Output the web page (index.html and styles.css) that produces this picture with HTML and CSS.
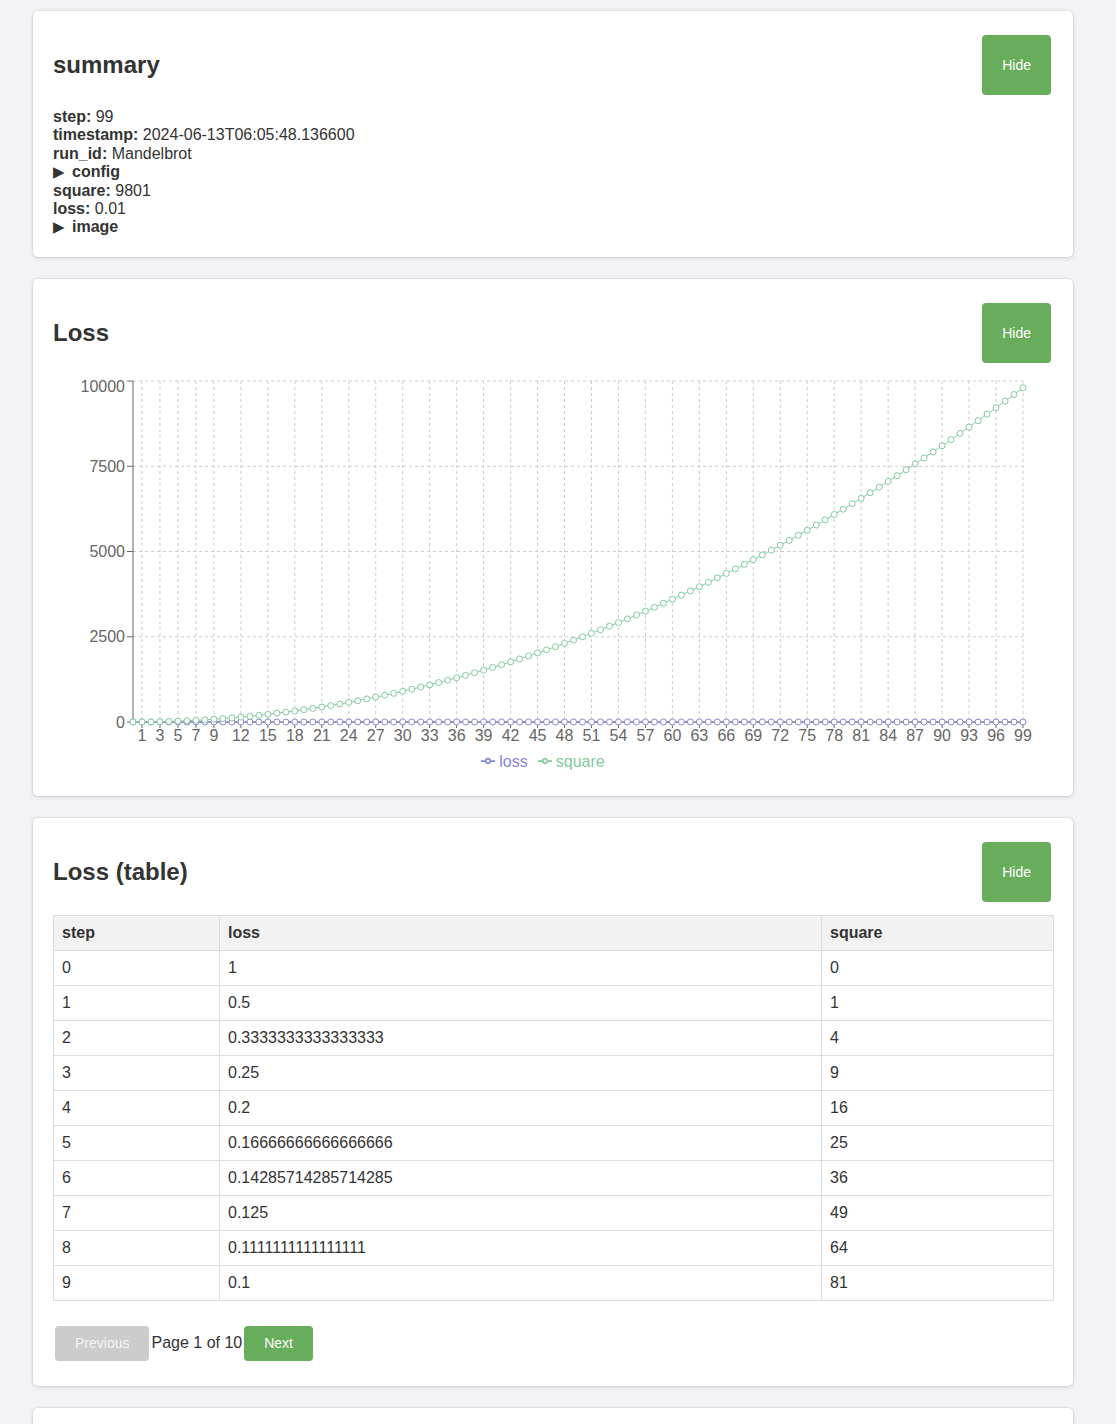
FILE: index.html
```html
<!DOCTYPE html>
<html lang="en">
<head>
<meta charset="utf-8">
<title>Run summary</title>
<link rel="stylesheet" href="styles.css">
</head>
<body>
<main class="page">
  <section class="card">
    <div class="card-header">
      <h2 class="card-title">summary</h2>
      <button class="btn btn-green btn-tall">Hide</button>
    </div>
    <div class="summary-list">
      <div><b>step:</b> 99</div>
      <div><b>timestamp:</b> 2024-06-13T06:05:48.136600</div>
      <div><b>run_id:</b> Mandelbrot</div>
      <details><summary>config</summary></details>
      <div><b>square:</b> 9801</div>
      <div><b>loss:</b> 0.01</div>
      <details><summary>image</summary></details>
    </div>
  </section>

  <section class="card">
    <div class="card-header">
      <h2 class="card-title">Loss</h2>
      <button class="btn btn-green btn-tall">Hide</button>
    </div>
    <div class="chart">
      <svg id="chart" class="chart-svg" width="1000" height="376" viewBox="0 0 1000 376"></svg>
      <div class="legend">
        <span class="legend-item legend-loss"><svg width="14" height="14" viewBox="0 0 32 32"><path d="M0,16h10.67A5.33,5.33 0 1,1 21.33,16H32M21.33,16A5.33,5.33 0 1,1 10.67,16" fill="none" stroke="#8884d8" stroke-width="4"/></svg><span>loss</span></span><span class="legend-item legend-square"><svg width="14" height="14" viewBox="0 0 32 32"><path d="M0,16h10.67A5.33,5.33 0 1,1 21.33,16H32M21.33,16A5.33,5.33 0 1,1 10.67,16" fill="none" stroke="#82ca9d" stroke-width="4"/></svg><span>square</span></span>
      </div>
    </div>
  </section>

  <section class="card">
    <div class="card-header">
      <h2 class="card-title">Loss (table)</h2>
      <button class="btn btn-green btn-tall">Hide</button>
    </div>
    <table class="data-table">
      <colgroup><col class="col-step"><col class="col-loss"><col class="col-square"></colgroup>
      <thead><tr><th>step</th><th>loss</th><th>square</th></tr></thead>
      <tbody>
        <tr><td>0</td><td>1</td><td>0</td></tr>
        <tr><td>1</td><td>0.5</td><td>1</td></tr>
        <tr><td>2</td><td>0.3333333333333333</td><td>4</td></tr>
        <tr><td>3</td><td>0.25</td><td>9</td></tr>
        <tr><td>4</td><td>0.2</td><td>16</td></tr>
        <tr><td>5</td><td>0.16666666666666666</td><td>25</td></tr>
        <tr><td>6</td><td>0.14285714285714285</td><td>36</td></tr>
        <tr><td>7</td><td>0.125</td><td>49</td></tr>
        <tr><td>8</td><td>0.1111111111111111</td><td>64</td></tr>
        <tr><td>9</td><td>0.1</td><td>81</td></tr>
      </tbody>
    </table>
    <div class="pagination">
      <button class="btn btn-gray btn-small" disabled>Previous</button>
      <span class="page-info">Page 1 of 10</span>
      <button class="btn btn-green btn-small">Next</button>
    </div>
  </section>

  <section class="card">
    <div class="card-header">
      <h2 class="card-title">Image</h2>
      <button class="btn btn-green btn-tall">Hide</button>
    </div>
  </section>
</main>
<script src="script.js"></script>
</body>
</html>
```

FILE: styles.css
```css
* { box-sizing: border-box; }
html, body { margin: 0; padding: 0; }
body {
  background: #f2f2f7;
  font-family: "Liberation Sans", Arial, sans-serif;
  color: #333;
  font-size: 16px;
}
.page {
  padding: 11px 0 40px 33px;
  display: flex;
  flex-direction: column;
  gap: 22px;
}
.card {
  width: 1040px;
  background: #fff;
  border-radius: 5px;
  box-shadow: 0 0 0 1px rgba(0,0,0,0.04), 0 1px 4px rgba(0,0,0,0.14);
  padding: 20px;
}
.card-header {
  height: 68px;
  display: flex;
  align-items: center;
  justify-content: space-between;
  margin-bottom: 9px;
}
.card-title {
  margin: 0;
  font-size: 24px;
  font-weight: bold;
  color: #333;
}
.btn {
  font-family: "Liberation Sans", Arial, sans-serif;
  font-size: 14px;
  color: #fff;
  border: none;
  border-radius: 4px;
  padding: 0 20px;
  cursor: pointer;
}
.btn-green { background: #67ad5b; }
.btn-gray { background: #cccccc; color: #f4f4f4; cursor: default; }
.btn-tall { height: 60px; margin-right: 2px; }
.btn-small { height: 35px; margin: 5px 2px; }

.summary-list { line-height: 18.4px; color: #333; }
.summary-list summary {
  font-weight: bold;
  cursor: pointer;
  list-style: none;
  display: block;
}
.summary-list summary::-webkit-details-marker { display: none; }
.summary-list summary::before {
  content: "\25B6";
  font-family: "DejaVu Sans", sans-serif;
  font-size: 15px;
  font-weight: normal;
  display: inline-block;
  width: 19px;
}

.chart { width: 1000px; height: 400px; }
.chart-svg { display: block; font-family: "Liberation Sans", Arial, sans-serif; }
.legend {
  margin-left: 20px;
  width: 950px;
  height: 19px;
  text-align: center;
  font-size: 16px;
  line-height: 19px;
}
.legend-item {
  display: inline-block;
  margin-right: 10px;
}
.legend-item svg { vertical-align: -1px; margin-right: 4px; }
.legend-loss { color: #8884d8; }
.legend-square { color: #82ca9d; }

.data-table {
  width: 1000px;
  border-collapse: collapse;
  table-layout: fixed;
  color: #333;
}
.col-step { width: 166px; }
.col-loss { width: 602px; }
.col-square { width: 232px; }
.data-table th, .data-table td {
  border: 1px solid #ddd;
  padding: 8px;
  line-height: 18px;
  text-align: left;
  font-size: 16px;
}
.data-table th { background: #f2f2f2; font-weight: bold; }

.pagination {
  margin-top: 20px;
  display: flex;
  align-items: center;
}
.page-info { color: #333; font-size: 16px; }
```

FILE: script.js
```js
(function () {
  var NS = "http://www.w3.org/2000/svg";
  var svg = document.getElementById("chart");
  var L = 80, R = 970, T = 5, B = 346;
  function xs(i) { return L + i * (R - L) / 99; }
  function ys(v) { return B - v / 10000 * (B - T); }
  function el(tag, attrs, text) {
    var e = document.createElementNS(NS, tag);
    for (var k in attrs) e.setAttribute(k, attrs[k]);
    if (text !== undefined) e.textContent = text;
    svg.appendChild(e);
    return e;
  }
  var xt = [1, 3, 5, 7, 9];
  for (var t = 12; t <= 99; t += 3) xt.push(t);
  var yt = [0, 2500, 5000, 7500, 10000];
  yt.forEach(function (v) {
    el("line", { x1: L, x2: R, y1: ys(v), y2: ys(v), stroke: "#ccc", "stroke-dasharray": "3 3" });
  });
  xt.forEach(function (i) {
    el("line", { x1: xs(i), x2: xs(i), y1: T, y2: B, stroke: "#ccc", "stroke-dasharray": "3 3" });
  });
  el("line", { x1: L, x2: R, y1: B, y2: B, stroke: "#666" });
  el("line", { x1: L, x2: L, y1: T, y2: B, stroke: "#666" });
  yt.forEach(function (v) {
    var ly = v === 10000 ? ys(v) + 5 : ys(v);
    el("line", { x1: L - 6, x2: L, y1: ys(v), y2: ys(v), stroke: "#666" });
    el("text", { x: L - 8, y: ly, dy: "0.355em", "text-anchor": "end", fill: "#666", "font-size": "16" }, String(v));
  });
  xt.forEach(function (i) {
    el("line", { x1: xs(i), x2: xs(i), y1: B, y2: B + 6, stroke: "#666" });
    el("text", { x: xs(i), y: B + 8, dy: "0.71em", "text-anchor": "middle", fill: "#666", "font-size": "16" }, String(i));
  });
  function series(fn, color) {
    var pts = [];
    for (var i = 0; i < 100; i++) pts.push(xs(i).toFixed(2) + "," + ys(fn(i)).toFixed(2));
    el("polyline", { points: pts.join(" "), fill: "none", stroke: color, "stroke-width": 1 });
    for (var j = 0; j < 100; j++) {
      el("circle", { cx: xs(j), cy: ys(fn(j)), r: 3, fill: "#fff", stroke: color, "stroke-width": 1 });
    }
  }
  series(function (i) { return 1 / (i + 1); }, "#8884d8");
  series(function (i) { return i * i; }, "#82ca9d");
})();
```
